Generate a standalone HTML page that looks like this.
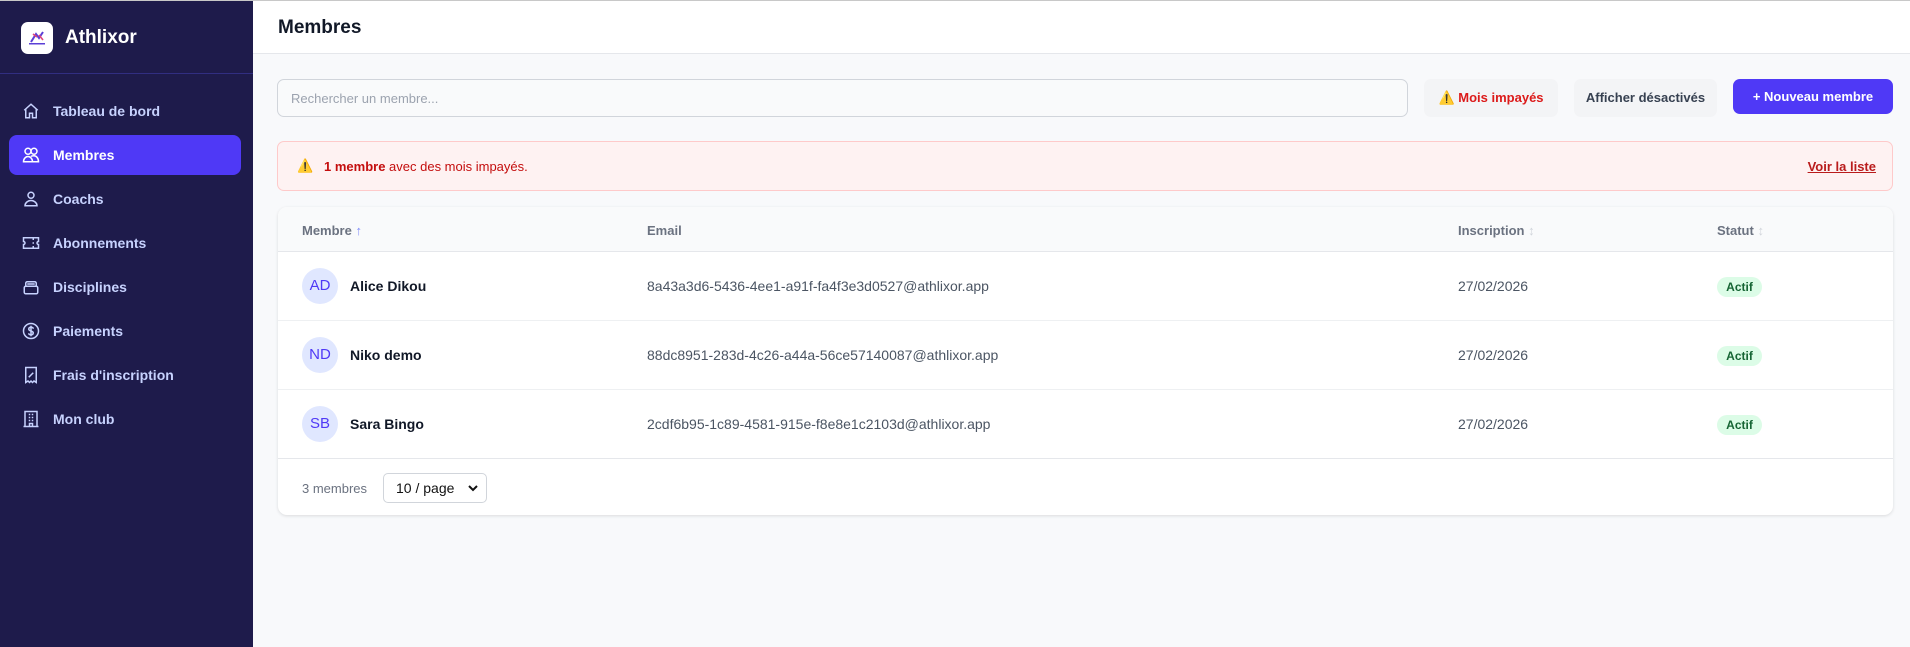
<!DOCTYPE html>
<html><head><meta charset="utf-8"><style>
*{box-sizing:border-box;margin:0;padding:0}
body{width:1910px;height:646px;overflow:hidden;background:#f8f9fb;font-family:"Liberation Sans",sans-serif;position:relative;border-top:1px solid #c8c8c8}
.sb{position:absolute;left:0;top:0;width:253px;height:646px;background:#1e1b4b}
.logo{position:absolute;left:21px;top:21px;width:32px;height:32px;background:#fff;border-radius:7px}
.brand{position:absolute;left:65px;top:26px;color:#fff;font-weight:bold;font-size:19px}
.div{position:absolute;left:0;top:72px;width:253px;height:1px;background:#312e81}
.nav{position:absolute;left:9px;width:232px;height:40px;border-radius:8px;color:#c7d2fe;font-size:14px;font-weight:bold}
.nav.act{background:#4f39f6;color:#fff}
.nav svg{position:absolute;left:13px;top:11px}
.nav span{position:absolute;left:44px;top:12px}
.hdr{position:absolute;left:253px;top:0;right:0;height:53px;background:#fff;border-bottom:1px solid #e5e7eb}
.hdr h1{position:absolute;left:25px;top:16px;font-size:19px;font-weight:bold;color:#111827}
.search{position:absolute;left:277px;top:78px;width:1131px;height:38px;border:1px solid #d1d5db;border-radius:7px;background:#f9fafb;color:#9ca3af;font-size:13px;padding:11px 13px}
.btn{position:absolute;top:78px;height:38px;border-radius:7px;font-size:13px;font-weight:bold;text-align:center;line-height:38px}
.alert{position:absolute;left:277px;top:140px;width:1616px;height:50px;background:#fef2f2;border:1px solid #fecaca;border-radius:7px;color:#c40e0e;font-size:13px}
.card{position:absolute;left:278px;top:206px;width:1615px;height:308px;background:#fff;border-radius:9px;box-shadow:0 1px 3px rgba(0,0,0,.12);overflow:hidden}
.th{position:absolute;top:0;left:0;right:0;height:45px;background:#f9fafb;border-bottom:1px solid #e5e7eb;color:#6b7280;font-size:13px;font-weight:bold}
.th div,.row div{position:absolute}
.th div{top:16px}
.row{position:absolute;left:0;right:0;height:69px;border-bottom:1px solid #eef0f2;font-size:14px;color:#4b5563}
.av{left:24px;top:16px;width:36px;height:36px;border-radius:50%;background:#e0e7ff;color:#4f39f6;font-size:15px;text-align:center;line-height:36px}
.nm{left:72px;top:26px;color:#111827;font-weight:bold}
.em{left:369px;top:26px}
.dt{left:1180px;top:26px}
.bd{left:1439px;top:25px;width:45px;height:20px;border-radius:10px;background:#dcfce7;color:#166534;font-size:12px;font-weight:bold;text-align:center;line-height:20px}
</style></head><body>
<div class="sb">
<div class="logo"><svg width="32" height="32" viewBox="0 0 32 32"><path d="M10 20 L15 12 L18 16 L22 10" stroke="#5b3fd6" stroke-width="2" fill="none"/><path d="M12 12 l4 3 M18 13 l4 5" stroke="#e0457b" stroke-width="1.6"/><rect x="8" y="21" width="16" height="1.5" fill="#5b3fd6"/></svg></div>
<div class="brand">Athlixor</div>
<div class="div"></div>
<div class="nav" style="top:90px"><svg width="18" height="18" viewBox="0 0 24 24" fill="none" stroke="#c7d2fe" stroke-width="2"><path d="M3 11l9-8 9 8M5 9v12h5v-6h4v6h5V9"/></svg><span>Tableau de bord</span></div>
<div class="nav act" style="top:134px"><svg width="18" height="18" viewBox="0 0 24 24" fill="none" stroke="#fff" stroke-width="2"><circle cx="8" cy="7" r="4"/><circle cx="16" cy="7" r="4"/><path d="M2 21c0-4 3-7 6-7s6 3 6 7zM12 14c1-1 2.5-1 4-1 3 0 6 3 6 8h-8"/></svg><span>Membres</span></div>
<div class="nav" style="top:178px"><svg width="18" height="18" viewBox="0 0 24 24" fill="none" stroke="#c7d2fe" stroke-width="2"><circle cx="12" cy="7" r="4"/><path d="M4 21c0-4 4-7 8-7s8 3 8 7z"/></svg><span>Coachs</span></div>
<div class="nav" style="top:222px"><svg width="18" height="18" viewBox="0 0 24 24" fill="none" stroke="#c7d2fe" stroke-width="2"><path d="M2 5h20v5a2 2 0 000 4v5H2v-5a2 2 0 000-4zM15 5v3M15 11v2M15 16v3"/></svg><span>Abonnements</span></div>
<div class="nav" style="top:266px"><svg width="18" height="18" viewBox="0 0 24 24" fill="none" stroke="#c7d2fe" stroke-width="2"><rect x="3" y="11" width="18" height="10" rx="2"/><path d="M5 11V7a2 2 0 012-2h10a2 2 0 012 2v4M7 8h10"/></svg><span>Disciplines</span></div>
<div class="nav" style="top:310px"><svg width="18" height="18" viewBox="0 0 24 24" fill="none" stroke="#c7d2fe" stroke-width="2"><circle cx="12" cy="12" r="10"/><path d="M15 9c0-1-1-2-3-2s-3 1-3 2.5 1.5 2 3 2.5 3 1 3 2.5-1 2.5-3 2.5-3-1-3-2M12 5v14"/></svg><span>Paiements</span></div>
<div class="nav" style="top:354px"><svg width="18" height="18" viewBox="0 0 24 24" fill="none" stroke="#c7d2fe" stroke-width="2"><path d="M5 2h14v20l-3-2-2 2-2-2-2 2-2-2-3 2zM9 15l6-6M9 9h.01M15 15h.01"/></svg><span>Frais d'inscription</span></div>
<div class="nav" style="top:398px"><svg width="18" height="18" viewBox="0 0 24 24" fill="none" stroke="#c7d2fe" stroke-width="2"><path d="M4 22V2h16v20zM2 22h20M9 6h2M13 6h2M9 10h2M13 10h2M9 14h2M13 14h2M10 22v-4h4v4"/></svg><span>Mon club</span></div>
</div>
<div class="hdr"><h1>Membres</h1></div>
<div class="search">Rechercher un membre...</div>
<div class="btn" style="left:1424px;width:134px;background:#f3f4f6;color:#dc1a1a">⚠️ Mois impayés</div>
<div class="btn" style="left:1574px;width:143px;background:#f3f4f6;color:#374151">Afficher désactivés</div>
<div class="btn" style="left:1733px;width:160px;height:35px;line-height:35px;background:#4f39f6;color:#fff">+ Nouveau membre</div>
<div class="alert"><span style="position:absolute;left:19px;top:16px">⚠️</span><span style="position:absolute;left:46px;top:17px"><b>1 membre</b> avec des mois impayés.</span><span style="position:absolute;right:16px;top:17px;font-weight:bold;text-decoration:underline;color:#b91c1c">Voir la liste</span></div>
<div class="card">
<div class="th"><div style="left:24px">Membre <span style="color:#818cf8">↑</span></div><div style="left:369px">Email</div><div style="left:1180px">Inscription <span style="color:#d1d5db">↕</span></div><div style="left:1439px">Statut <span style="color:#d1d5db">↕</span></div></div>
<div class="row" style="top:45px"><div class="av">AD</div><div class="nm">Alice Dikou</div><div class="em">8a43a3d6-5436-4ee1-a91f-fa4f3e3d0527@athlixor.app</div><div class="dt">27/02/2026</div><div class="bd">Actif</div></div>
<div class="row" style="top:114px"><div class="av">ND</div><div class="nm">Niko demo</div><div class="em">88dc8951-283d-4c26-a44a-56ce57140087@athlixor.app</div><div class="dt">27/02/2026</div><div class="bd">Actif</div></div>
<div class="row" style="top:183px;border-bottom:1px solid #e5e7eb"><div class="av">SB</div><div class="nm">Sara Bingo</div><div class="em">2cdf6b95-1c89-4581-915e-f8e8e1c2103d@athlixor.app</div><div class="dt">27/02/2026</div><div class="bd">Actif</div></div>
<div style="position:absolute;left:24px;top:274px;font-size:13px;color:#6b7280">3 membres</div>
<div style="position:absolute;left:105px;top:266px;width:104px;height:30px;border:1px solid #d1d5db;border-radius:5px;font-size:14px;color:#111;padding:6px 12px">10 / page<svg style="position:absolute;right:8px;top:11px" width="10" height="7" viewBox="0 0 10 7"><path d="M1 1l4 4 4-4" stroke="#111" stroke-width="2" fill="none"/></svg></div>
</div>
</body></html>
